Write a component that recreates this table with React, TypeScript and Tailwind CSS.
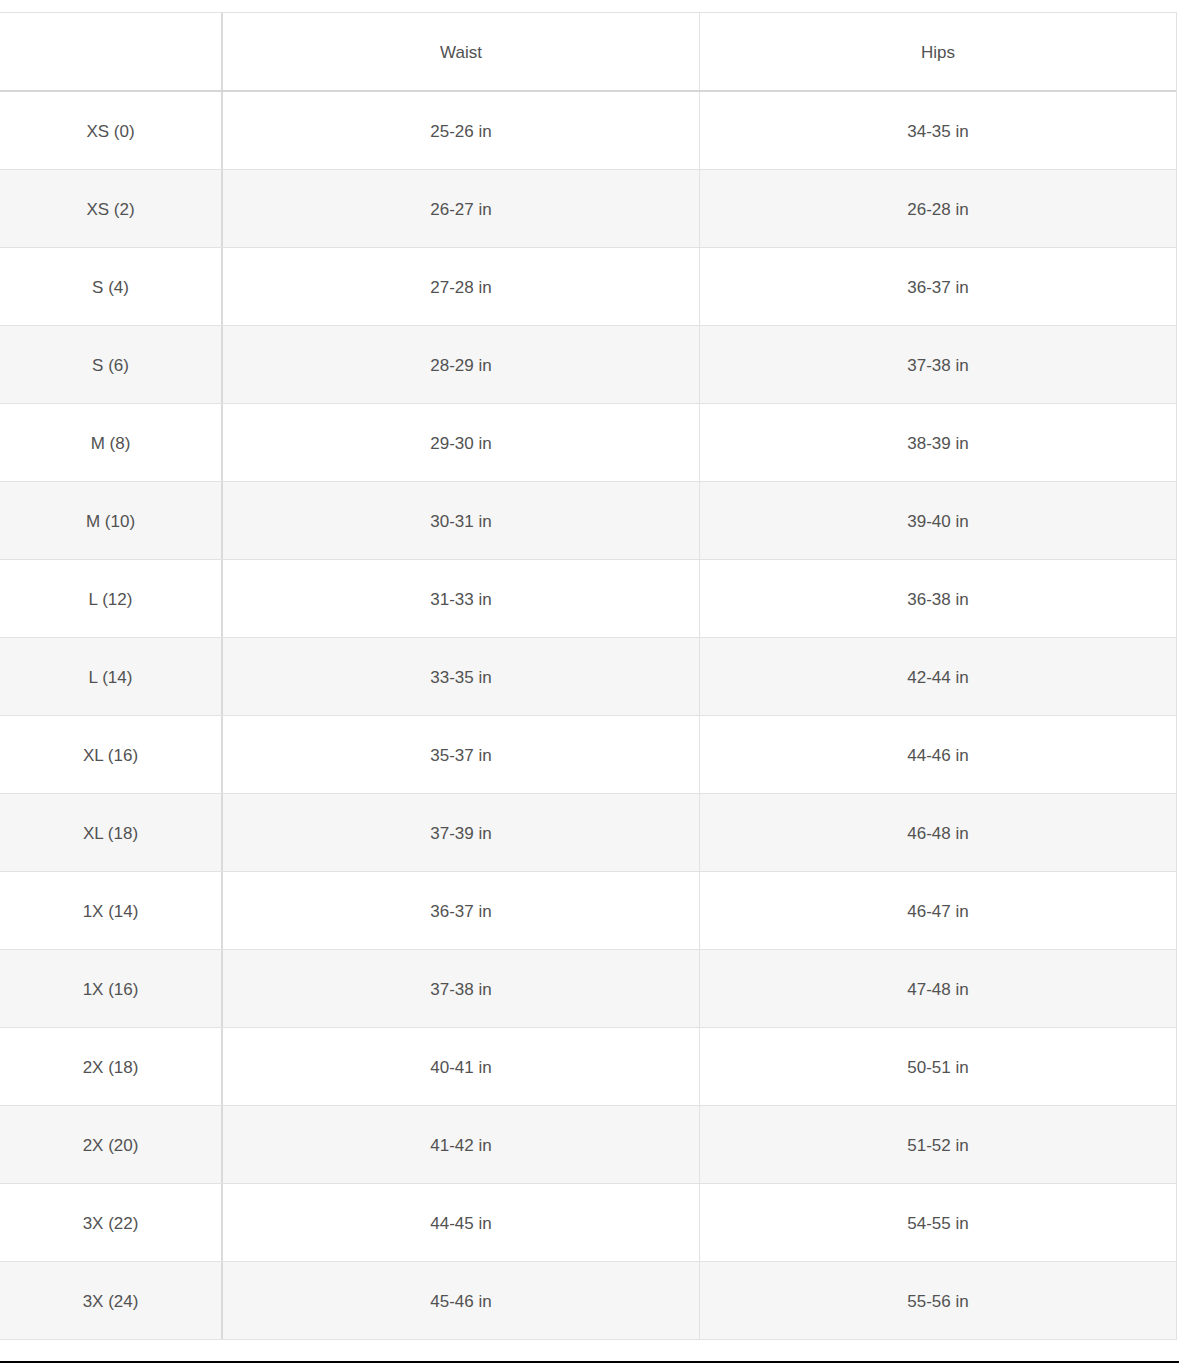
import React from "react";

const rows = [
  ["XS (0)", "25-26 in", "34-35 in"],
  ["XS (2)", "26-27 in", "26-28 in"],
  ["S (4)", "27-28 in", "36-37 in"],
  ["S (6)", "28-29 in", "37-38 in"],
  ["M (8)", "29-30 in", "38-39 in"],
  ["M (10)", "30-31 in", "39-40 in"],
  ["L (12)", "31-33 in", "36-38 in"],
  ["L (14)", "33-35 in", "42-44 in"],
  ["XL (16)", "35-37 in", "44-46 in"],
  ["XL (18)", "37-39 in", "46-48 in"],
  ["1X (14)", "36-37 in", "46-47 in"],
  ["1X (16)", "37-38 in", "47-48 in"],
  ["2X (18)", "40-41 in", "50-51 in"],
  ["2X (20)", "41-42 in", "51-52 in"],
  ["3X (22)", "44-45 in", "54-55 in"],
  ["3X (24)", "45-46 in", "55-56 in"],
];

const cell = "flex items-center justify-center pt-[2px]";

export default function App() {
  return (
    <div className="w-[1179px] h-[1363px] bg-white flex flex-col text-[17px] text-[#525252] font-['Liberation_Sans',Arial,sans-serif]">
      {/* Size table */}
      <div className="mt-[12px] w-[1177px] border-t border-r border-[#e2e2e2]">
        <div className="grid grid-cols-[223px_477px_476px] h-[79px] border-b-2 border-[#d6d6d6]">
          <div className={`${cell} border-r-2 border-[#dadada]`} />
          <div className={`${cell} border-r border-[#e2e2e2]`}>Waist</div>
          <div className={cell}>Hips</div>
        </div>
        {rows.map(([size, waist, hips], i) => (
          <div
            key={size}
            className={`grid grid-cols-[223px_477px_476px] h-[78px] border-b border-[#e2e2e2] ${
              i % 2 === 1 ? "bg-[#f6f6f6]" : "bg-white"
            }`}
          >
            <div className={`${cell} border-r-2 border-[#dadada]`}>{size}</div>
            <div className={`${cell} border-r border-[#e2e2e2]`}>{waist}</div>
            <div className={cell}>{hips}</div>
          </div>
        ))}
      </div>
      <div className="mt-auto h-[2px] bg-black" />
    </div>
  );
}
